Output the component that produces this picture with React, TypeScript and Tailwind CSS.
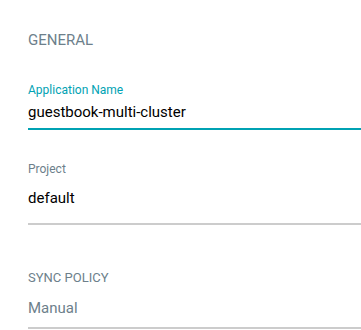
export default function App() {
  return (
    <div
      className="w-[361px] h-[330px] overflow-hidden bg-white pl-[28px] pt-[31px]"
      style={{ fontFamily: 'Roboto, "Liberation Sans", sans-serif' }}
    >
      {/* General section */}
      <div className="text-[15px] leading-[18px] text-[#6d7f8b]">GENERAL</div>

      <div className="mt-[34px]">
        <div className="text-[12px] leading-[14px] text-[#00a2b3]">Application Name</div>
        <div className="mt-[5px] text-[15px] leading-[20px] text-black pb-[6px] border-b-2 border-[#00a2b3]">
          guestbook-multi-cluster
        </div>
      </div>

      <div className="mt-[32px]">
        <div className="text-[12px] leading-[14px] text-[#6d7f8b]">Project</div>
        <div className="mt-[12px] text-[15px] leading-[20px] text-black pb-[15px] border-b-2 border-[#cccccc]">
          default
        </div>
      </div>

      {/* Sync policy */}
      <div className="mt-[46px]">
        <div className="text-[13px] leading-[14px] text-[#6d7f8b]">SYNC POLICY</div>
        <div className="mt-[13px] text-[15px] leading-[20px] text-[#6d7f8b] pb-[9px] border-b-2 border-[#cccccc]">
          Manual
        </div>
      </div>
    </div>
  );
}
